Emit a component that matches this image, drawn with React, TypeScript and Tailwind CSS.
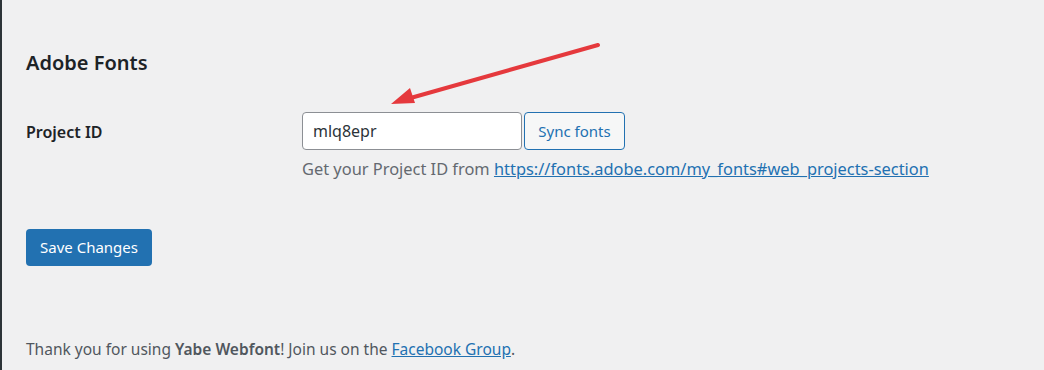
const App = () => {
  return (
    <div
      className="relative h-[370px] w-[1044px] overflow-hidden border-l-2 border-[#2c3338] bg-[#f0f0f1] pl-6 text-[#1d2327]"
      style={{ fontFamily: '"Noto Sans", sans-serif' }}
    >
      <h2 className="pt-[48px] text-[20px] font-semibold leading-[30px]">Adobe Fonts</h2>

      <div className="mt-[34px] flex">
        <label className="w-[276px] pt-[8px] text-[16px] font-semibold leading-[24px]">Project ID</label>
        <div>
          <div className="flex gap-[2px]">
            <input
              defaultValue="mlq8epr"
              className="h-[38px] w-[220px] rounded-[4px] border border-[#8c8f94] bg-white px-[10px] text-[16px] text-[#2c3338] outline-none"
            />
            <button className="h-[38px] w-[101px] rounded-[4px] border border-[#2271b1] bg-[#f6f7f7] text-[15px] text-[#2271b1]">
              Sync fonts
            </button>
          </div>
          <p className="mt-[7px] text-[16.4px] leading-[24px] text-[#646970]">
            Get your Project ID from{" "}
            <a href="#" className="text-[#2271b1] underline">
              https://fonts.adobe.com/my_fonts#web_projects-section
            </a>
          </p>
        </div>
      </div>

      <button className="mt-[48px] h-[37px] w-[126px] rounded-[4px] bg-[#2271b1] text-[15px] text-white">
        Save Changes
      </button>

      <p className="mt-[72px] text-[15.5px] leading-[22px] text-[#50575e]">
        Thank you for using <strong className="font-semibold">Yabe Webfont</strong>! Join us on the{" "}
        <a href="#" className="text-[#2271b1] underline">
          Facebook Group
        </a>
        .
      </p>

      <svg className="pointer-events-none absolute left-0 top-0" width="1044" height="370">
        <line x1="596" y1="45" x2="405" y2="99" stroke="#e5393d" strokeWidth="4" strokeLinecap="round" />
        <polygon points="389,104 408,88 413,103" fill="#e5393d" />
      </svg>
    </div>
  );
};

export default App;
